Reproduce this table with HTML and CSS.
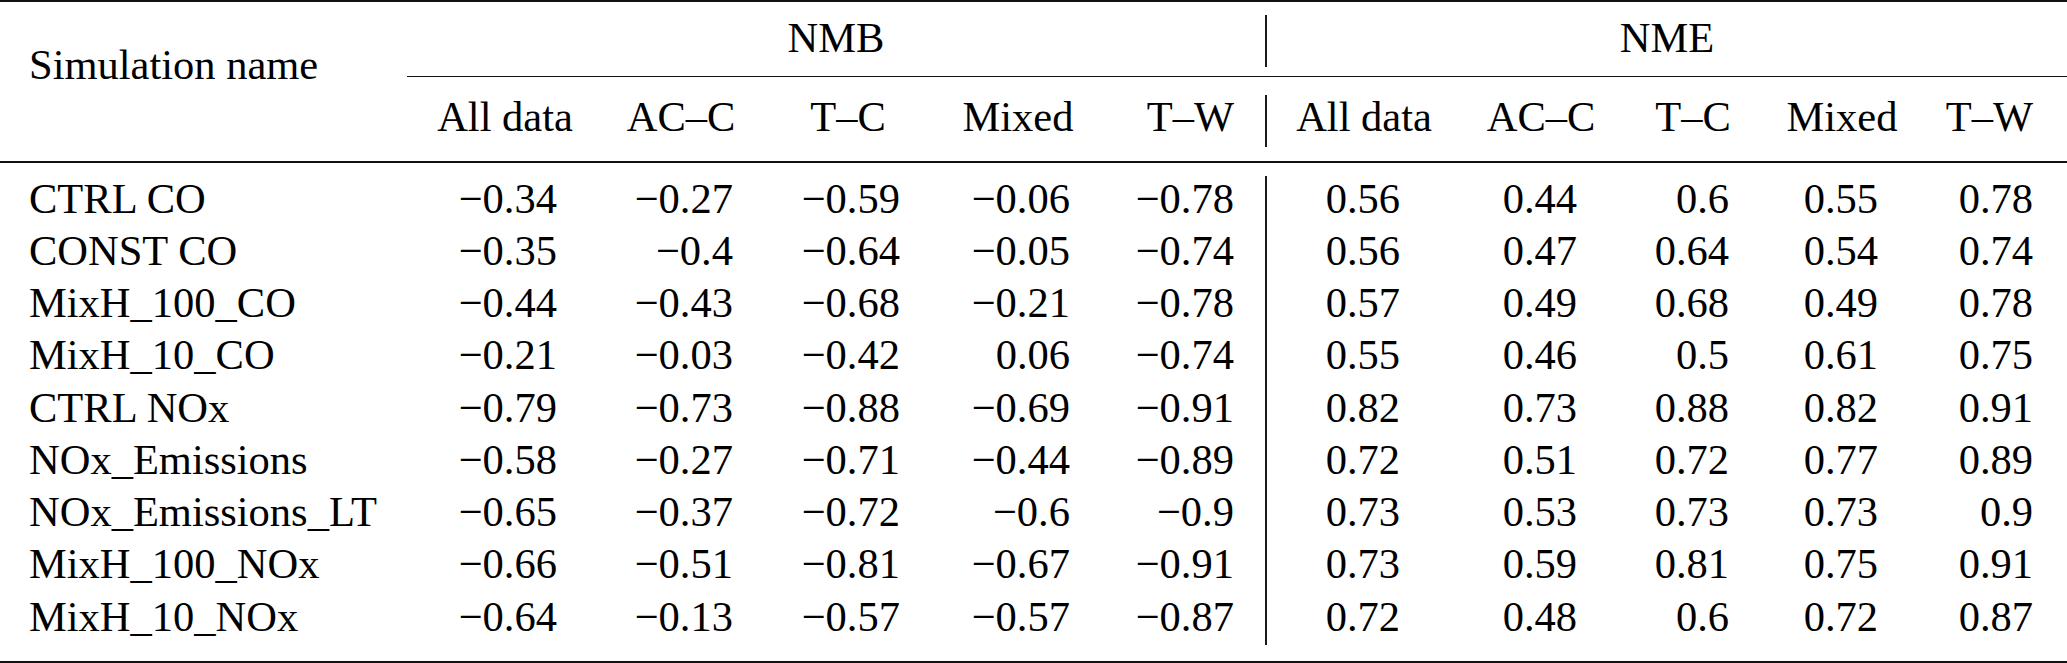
FILE: index.html
```html
<!DOCTYPE html>
<html lang="en">
<head>
<meta charset="utf-8">
<title>NMB / NME table</title>
<link rel="stylesheet" href="styles.css">
</head>
<body>
<div class="table">
  <div class="rule-heavy"></div>
  <div class="head">
    <div class="name-head">Simulation name</div>
    <div class="group nmb">NMB</div>
    <div class="vline vline-top"></div>
    <div class="group nme">NME</div>
    <div class="cmid"></div>
    <div class="sub s1 wide">All data</div>
    <div class="sub s2 wide">AC–C</div>
    <div class="sub s3 wide">T–C</div>
    <div class="sub s4 wide">Mixed</div>
    <div class="sub s5 right">T–W</div>
    <div class="vline vline-sub"></div>
    <div class="sub s6 narrow">All data</div>
    <div class="sub s7 narrow">AC–C</div>
    <div class="sub s8 narrow">T–C</div>
    <div class="sub s9 narrow">Mixed</div>
    <div class="sub s10 right">T–W</div>
  </div>
  <div class="rule-heavy"></div>
  <div class="body">
    <div class="vline vline-body"></div>
    <div class="row"><div>CTRL CO</div><div>−0.34</div><div>−0.27</div><div>−0.59</div><div>−0.06</div><div>−0.78</div><div>0.56</div><div>0.44</div><div>0.6</div><div>0.55</div><div>0.78</div></div>
    <div class="row"><div>CONST CO</div><div>−0.35</div><div>−0.4</div><div>−0.64</div><div>−0.05</div><div>−0.74</div><div>0.56</div><div>0.47</div><div>0.64</div><div>0.54</div><div>0.74</div></div>
    <div class="row"><div>MixH_100_CO</div><div>−0.44</div><div>−0.43</div><div>−0.68</div><div>−0.21</div><div>−0.78</div><div>0.57</div><div>0.49</div><div>0.68</div><div>0.49</div><div>0.78</div></div>
    <div class="row"><div>MixH_10_CO</div><div>−0.21</div><div>−0.03</div><div>−0.42</div><div>0.06</div><div>−0.74</div><div>0.55</div><div>0.46</div><div>0.5</div><div>0.61</div><div>0.75</div></div>
    <div class="row"><div>CTRL NOx</div><div>−0.79</div><div>−0.73</div><div>−0.88</div><div>−0.69</div><div>−0.91</div><div>0.82</div><div>0.73</div><div>0.88</div><div>0.82</div><div>0.91</div></div>
    <div class="row"><div>NOx_Emissions</div><div>−0.58</div><div>−0.27</div><div>−0.71</div><div>−0.44</div><div>−0.89</div><div>0.72</div><div>0.51</div><div>0.72</div><div>0.77</div><div>0.89</div></div>
    <div class="row"><div>NOx_Emissions_LT</div><div>−0.65</div><div>−0.37</div><div>−0.72</div><div>−0.6</div><div>−0.9</div><div>0.73</div><div>0.53</div><div>0.73</div><div>0.73</div><div>0.9</div></div>
    <div class="row"><div>MixH_100_NOx</div><div>−0.66</div><div>−0.51</div><div>−0.81</div><div>−0.67</div><div>−0.91</div><div>0.73</div><div>0.59</div><div>0.81</div><div>0.75</div><div>0.91</div></div>
    <div class="row"><div>MixH_10_NOx</div><div>−0.64</div><div>−0.13</div><div>−0.57</div><div>−0.57</div><div>−0.87</div><div>0.72</div><div>0.48</div><div>0.6</div><div>0.72</div><div>0.87</div></div>
  </div>
  <div class="rule-heavy"></div>
</div>
</body>
</html>
```

FILE: styles.css
```css
html, body {
  margin: 0;
  padding: 0;
  background: #ffffff;
}

.table {
  width: 2067px;
  color: #000;
  font-family: "Liberation Serif", "Times New Roman", serif;
  font-size: 42.5px;
  line-height: 52.25px;
}

.rule-heavy {
  height: 2px;
  background: #111;
}

.head,
.body {
  display: grid;
  grid-template-columns: 407px 150px 176px 167px 170px 164px 31px 2px 133px 177px 152px 149px 155px 34px;
}

.head {
  grid-template-rows: 74px 1px 84px;
}

.name-head {
  grid-column: 1;
  grid-row: 1 / 4;
  padding: 36.5px 0 0 29px;
  white-space: nowrap;
}

.group {
  grid-row: 1;
  padding-top: 9.5px;
  text-align: center;
}

.nmb { grid-column: 2 / 8; }
.nme { grid-column: 9 / 15; }

.cmid {
  grid-column: 2 / 15;
  grid-row: 2;
  background: #111;
}

.sub {
  grid-row: 3;
  padding-top: 13.5px;
  justify-self: end;
  display: flex;
  justify-content: center;
  white-space: nowrap;
}

.sub.wide { width: 104px; }
.sub.narrow { width: 72px; }
.sub.right { justify-content: flex-end; }

.s1 { grid-column: 2; }
.s2 { grid-column: 3; }
.s3 { grid-column: 4; }
.s4 { grid-column: 5; }
.s5 { grid-column: 6; }
.s6 { grid-column: 9; }
.s7 { grid-column: 10; }
.s8 { grid-column: 11; }
.s9 { grid-column: 12; }
.s10 { grid-column: 13; }

.vline {
  grid-column: 8;
  background: #1a1a1a;
  align-self: start;
}

.vline-top {
  grid-row: 1;
  margin-top: 13px;
  height: 52px;
}

.vline-sub {
  grid-row: 3;
  margin-top: 18px;
  height: 52px;
}

.body {
  padding: 9.5px 0 18.25px;
}

.vline-body {
  grid-row: 1 / span 9;
  align-self: stretch;
  margin-top: 3.5px;
  margin-bottom: -2.25px;
}

.row {
  display: contents;
}

.row > div {
  white-space: nowrap;
  justify-self: end;
}

.row > div:nth-child(1) { grid-column: 1; justify-self: start; padding-left: 29px; }
.row > div:nth-child(2) { grid-column: 2; }
.row > div:nth-child(3) { grid-column: 3; }
.row > div:nth-child(4) { grid-column: 4; }
.row > div:nth-child(5) { grid-column: 5; }
.row > div:nth-child(6) { grid-column: 6; }
.row > div:nth-child(7) { grid-column: 9; }
.row > div:nth-child(8) { grid-column: 10; }
.row > div:nth-child(9) { grid-column: 11; }
.row > div:nth-child(10) { grid-column: 12; }
.row > div:nth-child(11) { grid-column: 13; }
```
